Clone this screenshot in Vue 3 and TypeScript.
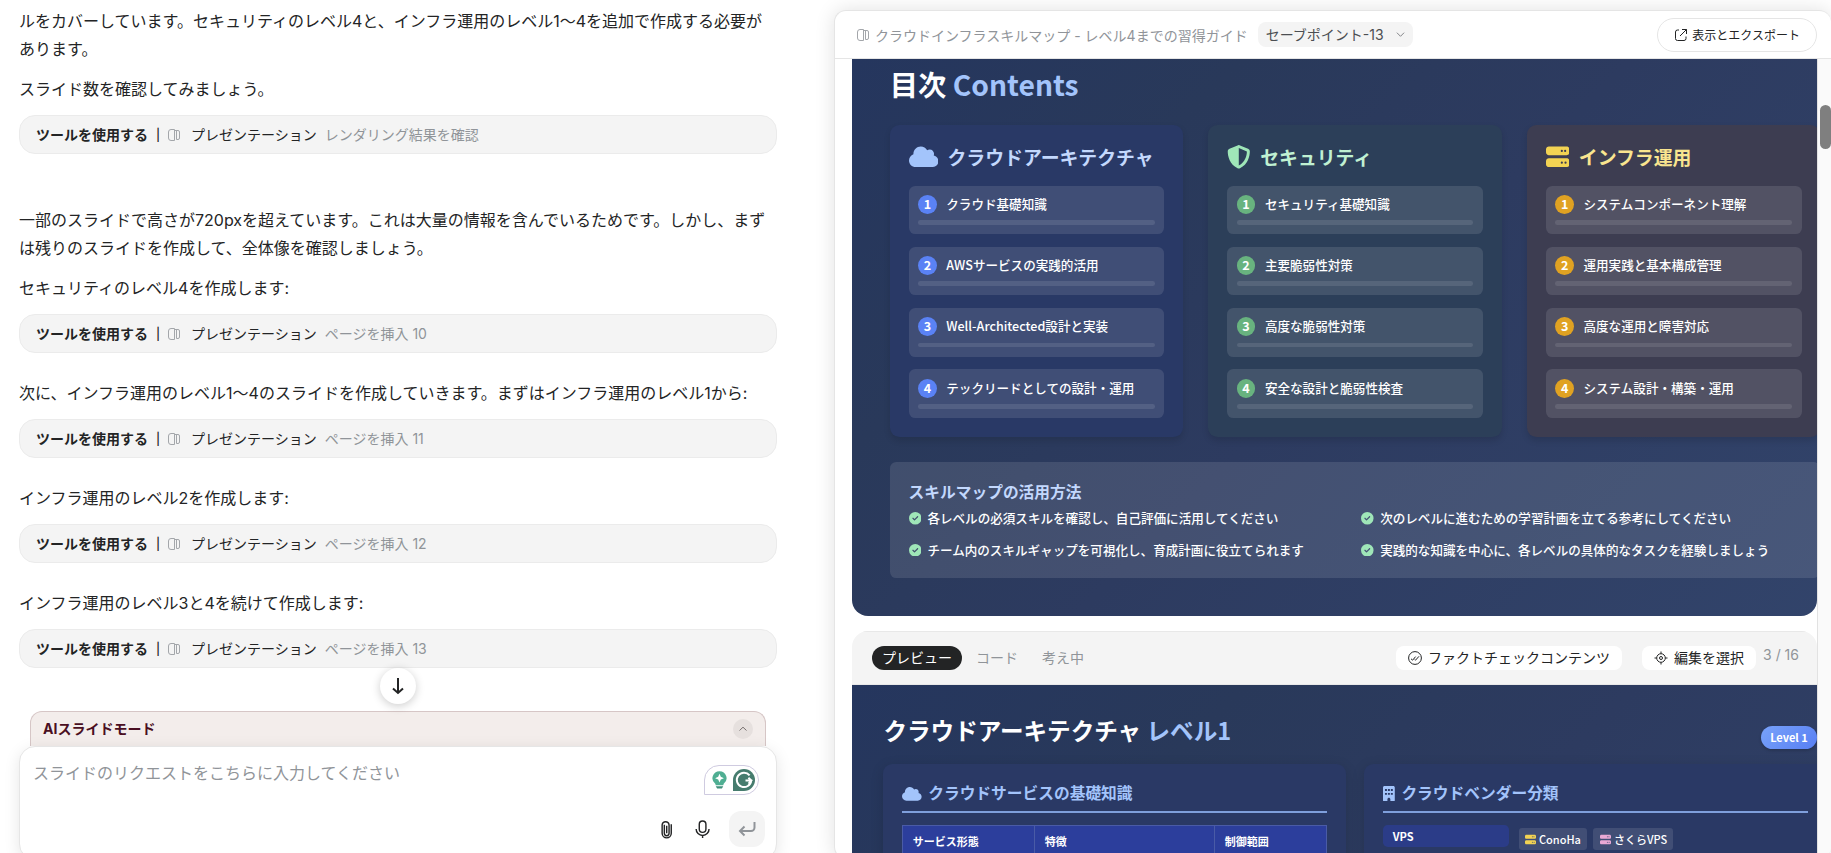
<script setup lang="ts">
import { ref } from 'vue'

interface Block {
  id: number
  lines: string[]
  action?: string
  spaced?: boolean
}

const blocks: Block[] = [
  {
    id: 1,
    lines: [
      'ルをカバーしています。セキュリティのレベル4と、インフラ運用のレベル1〜4を追加で作成する必要があります。',
      'スライド数を確認してみましょう。',
    ],
    action: 'レンダリング結果を確認',
    spaced: true,
  },
  {
    id: 2,
    lines: [
      '一部のスライドで高さが720pxを超えています。これは大量の情報を含んでいるためです。しかし、まずは残りのスライドを作成して、全体像を確認しましょう。',
      'セキュリティのレベル4を作成します:',
    ],
    action: 'ページを挿入 10',
  },
  {
    id: 3,
    lines: ['次に、インフラ運用のレベル1〜4のスライドを作成していきます。まずはインフラ運用のレベル1から:'],
    action: 'ページを挿入 11',
  },
  { id: 4, lines: ['インフラ運用のレベル2を作成します:'], action: 'ページを挿入 12' },
  { id: 5, lines: ['インフラ運用のレベル3と4を続けて作成します:'], action: 'ページを挿入 13' },
]

const deckPath =
  'M6.500 .5H3A2.500 2.500 0 0 0 .5 3v6A2.500 2.500 0 0 0 3 11.500h3.500zM6.500 1.500H10A1.500 1.500 0 0 1 11.500 3v6A1.500 1.500 0 0 1 10 10.500H8.500V1.500'
const serverPath =
  'M64 32C28.700 32 0 60.700 0 96v64c0 35.300 28.700 64 64 64H448c35.300 0 64-28.700 64-64V96c0-35.300-28.700-64-64-64H64zm280 72a24 24 0 1 1 0 48 24 24 0 1 1 0-48zm48 24a24 24 0 1 1 48 0 24 24 0 1 1 -48 0zM64 288c-35.300 0-64 28.700-64 64v64c0 35.300 28.700 64 64 64H448c35.300 0 64-28.700 64-64V352c0-35.300-28.700-64-64-64H64zm280 72a24 24 0 1 1 0 48 24 24 0 1 1 0-48zm56 24a24 24 0 1 1 48 0 24 24 0 1 1 -48 0z'
const cloudPath =
  'M0 336c0 79.500 64.500 144 144 144H512c70.700 0 128-57.300 128-128c0-61.900-44-113.600-102.400-125.400c4.100-10.700 6.400-22.400 6.400-34.600c0-53-43-96-96-96c-19.700 0-38.100 6-53.300 16.200C367 64.200 315.300 32 256 32C167.600 32 96 103.600 96 192c0 2.700 .1 5.400 .2 8.100C40.200 219.800 0 273.200 0 336z'
const shieldPath =
  'M256 0c4.600 0 9.200 1 13.400 2.900L457.700 82.800c22 9.300 38.400 31 38.300 57.200c-.5 99.200-41.300 280.700-213.600 363.200c-16.700 8-36.100 8-52.800 0C57.300 420.700 16.500 239.200 16 140c-.1-26.200 16.300-47.900 38.300-57.200L242.700 2.900C246.800 1 251.400 0 256 0zm0 66.800V444.800C394 378 431.100 230.100 432 141.400L256 66.800l0 0z'
const checkPath =
  'M256 512A256 256 0 1 0 256 0a256 256 0 1 0 0 512zM369 209L241 337c-9.400 9.400-24.600 9.400-33.900 0l-64-64c-9.400-9.400-9.400-24.600 0-33.900s24.600-9.400 33.900 0l47 47L335 175c9.400-9.400 24.600-9.400 33.900 0s9.400 24.600 0 33.900z'
const buildingPath =
  'M48 0C21.500 0 0 21.500 0 48V464c0 26.500 21.500 48 48 48h96V432c0-26.500 21.500-48 48-48s48 21.500 48 48v80h96c26.500 0 48-21.500 48-48V48c0-26.500-21.500-48-48-48H48zM64 96h64v64H64zM160 96h64v64h-64zM256 96h64v64h-64zM64 224h64v64H64zM160 224h64v64h-64zM256 224h64v64h-64z'

const tracks = [
  {
    key: 'cloud',
    title: 'クラウドアーキテクチャ',
    box: '0 0 640 512',
    icon: cloudPath,
    items: ['クラウド基礎知識', 'AWSサービスの実践的活用', 'Well-Architected設計と実装', 'テックリードとしての設計・運用'],
  },
  {
    key: 'security',
    title: 'セキュリティ',
    box: '0 0 512 512',
    icon: shieldPath,
    items: ['セキュリティ基礎知識', '主要脆弱性対策', '高度な脆弱性対策', '安全な設計と脆弱性検査'],
  },
  {
    key: 'infra',
    title: 'インフラ運用',
    box: '0 0 512 512',
    icon: serverPath,
    items: ['システムコンポーネント理解', '運用実践と基本構成管理', '高度な運用と障害対応', 'システム設計・構築・運用'],
  },
]

const tips = [
  '各レベルの必須スキルを確認し、自己評価に活用してください',
  '次のレベルに進むための学習計画を立てる参考にしてください',
  'チーム内のスキルギャップを可視化し、育成計画に役立てられます',
  '実践的な知識を中心に、各レベルの具体的なタスクを経験しましょう',
]

const tabs = ['プレビュー', 'コード', '考え中']
const activeTab = ref('プレビュー')
const savepoint = ref('セーブポイント-13')
const draft = ref('')
</script>

<template>
  <div class="page">
    <main class="chat">
      <div class="messages">
        <section v-for="b in blocks" :key="b.id" class="block" :class="{ spaced: b.spaced }">
          <p v-for="line in b.lines" :key="line">{{ line }}</p>
          <div class="tool">
            <strong>ツールを使用する</strong>
            <span class="bar">|</span>
            <svg class="deck" viewBox="0 0 12 12" aria-hidden="true"><path :d="deckPath" /></svg>
            <span>プレゼンテーション</span>
            <span class="action">{{ b.action }}</span>
          </div>
        </section>
      </div>

      <div class="dock">
        <button class="jump" type="button" aria-label="一番下へ">
          <svg viewBox="0 0 18 18" aria-hidden="true"><path d="M9 1v15M4 11.500l5 4.500 5-4.500" /></svg>
        </button>
        <div class="mode">
          <span>AIスライドモード</span>
          <button type="button" class="fold" aria-label="折りたたむ">
            <svg viewBox="0 0 10 10" aria-hidden="true"><path d="M1.500 6.500L5 3.200l3.500 3.300" /></svg>
          </button>
        </div>
        <form class="composer" @submit.prevent>
          <div class="entry">
            <textarea v-model="draft" rows="1" aria-label="リクエスト" placeholder="スライドのリクエストをこちらに入力してください"></textarea>
            <div class="assist">
              <svg class="bulb" viewBox="0 0 16 20" aria-hidden="true">
                <path d="M8 0a7.500 7.500 0 0 0-4.500 13.500L4 15h8l.5-1.500A7.500 7.500 0 0 0 8 0z" fill="#4fae92" />
                <path d="M4 16h8l-1.500 2.500h-5z" fill="#3f8f7b" />
                <path d="M8 2.800l1.400 3.300 3.300 1.400-3.300 1.400L8 12.200 6.600 8.900 3.300 7.500l3.300-1.400z" fill="#fff" />
              </svg>
              <svg class="gram" viewBox="0 0 22 22" aria-hidden="true">
                <path d="M11 0a11 11 0 0 1 0 22H0V11A11 11 0 0 1 11 0z" fill="#467c6e" />
                <path d="M16.600 6.300A7.200 7.200 0 1 0 18.200 11.600H12.500M15.400 8.700l3 2.900-2.900 3" fill="none" stroke="#fff" stroke-width="2" />
              </svg>
            </div>
          </div>
          <div class="actions">
            <button type="button" aria-label="添付">
              <svg viewBox="0 0 12 20" aria-hidden="true"><path d="M3.500 5v9a2.500 2.500 0 0 0 5 0V5A3.700 3.700 0 0 0 1.200 5v9a4.800 4.800 0 0 0 9.600 0V4.500M6 6v8" /></svg>
            </button>
            <button type="button" aria-label="音声入力">
              <svg viewBox="0 0 16 20" aria-hidden="true"><rect x="4.500" y="1" width="7" height="12" rx="3.500" /><path d="M1.200 9.500a6.800 6.800 0 0 0 13.600 0M8 16.300V19" /></svg>
            </button>
            <button type="submit" class="send" aria-label="送信">
              <svg viewBox="0 0 18 18" aria-hidden="true"><path d="M16.500 2v5.500A3.500 3.500 0 0 1 13 11H2M6.500 6.500L2 11l4.500 4.500" /></svg>
            </button>
          </div>
        </form>
      </div>
    </main>

    <aside class="panel">
      <header class="panel-head">
        <svg class="deck" viewBox="0 0 12 12" aria-hidden="true"><path :d="deckPath" /></svg>
        <h1>クラウドインフラスキルマップ - レベル4までの習得ガイド</h1>
        <div class="save">
          <select v-model="savepoint" aria-label="セーブポイント">
            <option>セーブポイント-13</option>
          </select>
          <svg viewBox="0 0 10 10" aria-hidden="true"><path d="M1 3l4 4 4-4" /></svg>
        </div>
        <button class="export" type="button">
          <svg viewBox="0 0 14 14" aria-hidden="true"><path d="M5 2H3.500A2 2 0 0 0 1.500 4v6.500a2 2 0 0 0 2 2H10a2 2 0 0 0 2-2V8.500M8 1.500h4.500V6M12.500 1.500L6 8" /></svg>
          表示とエクスポート
        </button>
      </header>

      <div class="viewport">
        <div class="deck-list">
          <article class="frame first">
            <div class="slide contents">
              <h2>目次 <em>Contents</em></h2>
              <div class="tracks">
                <section v-for="t in tracks" :key="t.key" class="track" :class="t.key">
                  <h3>
                    <svg :viewBox="t.box" aria-hidden="true"><path :d="t.icon" /></svg>
                    {{ t.title }}
                  </h3>
                  <ol>
                    <li v-for="(item, i) in t.items" :key="item">
                      <div class="row"><span class="num">{{ i + 1 }}</span>{{ item }}</div>
                      <div class="meter"></div>
                    </li>
                  </ol>
                </section>
              </div>
              <section class="note">
                <h4>スキルマップの活用方法</h4>
                <ul>
                  <li v-for="tip in tips" :key="tip">
                    <svg viewBox="0 0 512 512" aria-hidden="true"><path :d="checkPath" /></svg>{{ tip }}
                  </li>
                </ul>
              </section>
            </div>
          </article>

          <article class="frame">
            <div class="bar-top">
              <nav>
                <button v-for="tab in tabs" :key="tab" type="button" :class="{ on: tab === activeTab }" @click="activeTab = tab">{{ tab }}</button>
              </nav>
              <div class="tools">
                <button type="button">
                  <svg viewBox="0 0 14 14" aria-hidden="true"><circle cx="7" cy="7" r="6.400" /><path d="M3 7.800l1.600 1.400 3-3.600M6.600 8.300l.9.900L11 5.300" /></svg>
                  ファクトチェックコンテンツ
                </button>
                <button type="button">
                  <svg viewBox="0 0 14 14" aria-hidden="true"><circle cx="7" cy="7" r="4.300" /><circle cx="7" cy="7" r="1.500" /><path d="M7 .5v2.200M7 11.300v2.200M.5 7h2.200M11.300 7h2.200" /></svg>
                  編集を選択
                </button>
              </div>
              <span class="count">3 / 16</span>
            </div>
            <div class="slide level">
              <div class="title-row">
                <h2>クラウドアーキテクチャ <em>レベル1</em></h2>
                <span class="badge">Level 1</span>
              </div>
              <div class="halves">
                <section class="half">
                  <h3><svg viewBox="0 0 640 512" class="wide" aria-hidden="true"><path :d="cloudPath" /></svg>クラウドサービスの基礎知識</h3>
                  <table>
                    <thead>
                      <tr><th class="c1">サービス形態</th><th class="c2">特徴</th><th>制御範囲</th></tr>
                    </thead>
                  </table>
                </section>
                <section class="half">
                  <h3><svg viewBox="0 0 384 512" class="slim" aria-hidden="true"><path fill-rule="evenodd" :d="buildingPath" /></svg>クラウドベンダー分類</h3>
                  <div class="vendor">
                    <strong>VPS</strong>
                    <span class="tag yellow"><svg viewBox="0 0 512 512" aria-hidden="true"><path :d="serverPath" /></svg>ConoHa</span>
                    <span class="tag pink"><svg viewBox="0 0 512 512" aria-hidden="true"><path :d="serverPath" /></svg>さくらVPS</span>
                  </div>
                </section>
              </div>
            </div>
          </article>
        </div>
        <div class="track-bar"><div class="thumb"></div></div>
      </div>
    </aside>
  </div>
</template>

<style>
body {
  margin: 0;
  background: #fff;
}
</style>

<style scoped>
* {
  box-sizing: border-box;
}
h1, h2, h3, h4, p, ul, ol {
  margin: 0;
  padding: 0;
  list-style: none;
}
button {
  margin: 0;
  padding: 0;
  border: 0;
  background: none;
  font: inherit;
  color: inherit;
  cursor: pointer;
}
svg {
  flex: none;
}
em {
  font-style: normal;
}
.page {
  display: grid;
  grid-template-columns: minmax(0, 796fr) minmax(0, 997fr);
  column-gap: 38px;
  height: 100vh;
  overflow: hidden;
  font-family: Inter, "Noto Sans CJK JP", sans-serif;
  color: #232425;
}

/* chat column */
.chat {
  display: flex;
  flex-direction: column;
  min-height: 0;
  padding: 0 19px;
}
.messages {
  flex: 1;
  min-height: 0;
  overflow: hidden;
  display: flex;
  flex-direction: column;
  gap: 26px;
  padding-top: 7px;
}
.block {
  display: flex;
  flex-direction: column;
  gap: 12px;
  font-size: 16px;
  line-height: 28px;
}
.spaced {
  margin-bottom: 26px;
}
.tool {
  display: flex;
  align-items: center;
  height: 39px;
  padding: 0 16px;
  border: 1px solid #ebebeb;
  border-radius: 16px;
  background: #f4f4f4;
  font-size: 14px;
  line-height: 20px;
  white-space: nowrap;
}
.bar {
  width: 4px;
  margin: 0 8px;
  font-size: 12px;
  font-weight: 500;
  text-align: center;
}
.deck {
  width: 12px;
  height: 12px;
  fill: none;
  stroke: #a3a6aa;
}
.tool .deck {
  margin-right: 11px;
}
.action {
  margin-left: 8px;
  color: #909499;
}
.dock {
  position: relative;
  margin-bottom: -7px;
}
.jump {
  position: absolute;
  top: -43px;
  left: 50%;
  margin-left: -18px;
  width: 36px;
  height: 36px;
  display: grid;
  place-items: center;
  border-radius: 50%;
  background: #fff;
  box-shadow: 0 2px 10px rgba(0, 0, 0, 0.2);
}
.jump svg {
  width: 18px;
  height: 18px;
  fill: none;
  stroke: #232425;
  stroke-width: 2;
}
.mode {
  display: flex;
  align-items: center;
  justify-content: space-between;
  height: 35px;
  margin: 0 11px;
  padding: 0 12px;
  border: 1px solid #d6c6c6;
  border-bottom: 0;
  border-radius: 12px 12px 0 0;
  background: #f3edeb;
  color: #4a0f22;
  font-size: 14px;
  line-height: 20px;
  font-weight: 700;
}
.fold {
  display: grid;
  place-items: center;
  width: 20px;
  height: 20px;
  border-radius: 50%;
  background: #e6e0de;
}
.fold svg {
  width: 10px;
  height: 10px;
  fill: none;
  stroke: #77706f;
}
.composer {
  display: flex;
  flex-direction: column;
  justify-content: space-between;
  height: 114px;
  padding: 12px 11px;
  border: 1px solid #e6e6e6;
  border-radius: 16px;
  background: #fff;
  box-shadow: 0 4px 16px rgba(0, 0, 0, 0.1);
}
.entry {
  display: flex;
  justify-content: space-between;
  padding-right: 6px;
}
textarea {
  flex: 1;
  height: 28px;
  padding: 0 2px;
  border: 0;
  outline: 0;
  resize: none;
  overflow: hidden;
  background: none;
  font: inherit;
  font-size: 16px;
  line-height: 28px;
  color: #232425;
}
textarea::placeholder {
  color: #909499;
  opacity: 1;
}
.assist {
  display: flex;
  align-items: center;
  gap: 6px;
  height: 30px;
  margin-top: 6px;
  padding: 0 3px 0 7px;
  border: 1px solid #cfcbe0;
  border-radius: 15px 15px 15px 0;
}
.bulb {
  width: 15px;
  height: 19px;
}
.gram {
  width: 22px;
  height: 22px;
}
.actions {
  display: flex;
  justify-content: flex-end;
  align-items: center;
}
.actions button {
  display: grid;
  place-items: center;
  width: 36px;
  height: 36px;
}
.actions svg {
  height: 19px;
  fill: none;
  stroke: #232425;
  stroke-width: 1.500;
}
.actions .send {
  margin-left: 8px;
  border-radius: 12px;
  background: #f4f4f4;
}
.actions .send svg {
  height: 18px;
  stroke: #909499;
  stroke-width: 2;
}

/* presentation panel */
.panel {
  display: flex;
  flex-direction: column;
  min-width: 0;
  min-height: 0;
  margin: 10px 0 -6px;
  border: 1px solid #e5e5e5;
  border-right: 0;
  border-radius: 12px;
  background: #fff;
  box-shadow: 0 0 20px rgba(0, 0, 0, 0.12);
  overflow: hidden;
}
.panel-head {
  display: flex;
  align-items: center;
  flex: none;
  height: 48px;
  padding: 0 14px 0 22px;
  border-bottom: 1px solid #e5e5e5;
  font-size: 14px;
  white-space: nowrap;
}
.panel-head h1 {
  margin: 0 10px 0 6px;
  font-size: 14px;
  font-weight: 400;
  color: #909499;
}
.save {
  position: relative;
  display: flex;
  align-items: center;
}
.save select {
  appearance: none;
  height: 25px;
  padding: 0 28px 0 8px;
  border: 0;
  border-radius: 8px;
  background: #f4f4f4;
  font: inherit;
  font-size: 14px;
  color: #4b4e52;
}
.save svg {
  position: absolute;
  right: 8px;
  width: 9px;
  height: 9px;
  fill: none;
  stroke: #77797d;
  pointer-events: none;
}
.export {
  display: flex;
  align-items: center;
  gap: 4px;
  height: 34px;
  margin-left: auto;
  padding: 0 16px;
  border: 1px solid #e5e5e5;
  border-radius: 17px;
  font-size: 12px;
}
.export svg {
  width: 14px;
  height: 14px;
  fill: none;
  stroke: #232425;
}
.viewport {
  display: flex;
  flex: 1;
  min-height: 0;
}
.deck-list {
  flex: 1;
  min-width: 0;
  overflow: hidden;
  padding-left: 17px;
}
.track-bar {
  flex: none;
  width: 14px;
  padding: 46px 0 0 2px;
  border-left: 1px solid #e2e2e2;
  background: #fafafa;
}
.thumb {
  height: 44px;
  border-radius: 6px;
  background: #7f7f7f;
}
.frame {
  overflow: hidden;
  border-radius: 16px;
}
.first {
  margin-bottom: 15px;
  border-radius: 0 0 16px 16px;
}
.bar-top {
  display: flex;
  align-items: center;
  height: 54px;
  padding: 0 18px 0 20px;
  border: 1px solid #e8e8e8;
  border-width: 1px 0;
  background: #f4f4f4;
  font-size: 14px;
  line-height: 20px;
  white-space: nowrap;
}
.bar-top nav {
  display: flex;
  gap: 4px;
  color: #909499;
}
.bar-top nav button {
  height: 24px;
  padding: 0 10px;
  border-radius: 12px;
}
.bar-top nav .on {
  background: #232425;
  color: #fff;
}
.tools {
  display: flex;
  gap: 20px;
  margin-left: auto;
}
.tools button {
  display: flex;
  align-items: center;
  gap: 6px;
  height: 24px;
  padding: 0 12px;
  border-radius: 8px;
  background: #fff;
}
.tools svg {
  width: 14px;
  height: 14px;
  fill: none;
  stroke: #232425;
}
.count {
  align-self: flex-start;
  margin: 13px 0 0 7px;
  color: #909499;
}

/* slides are authored on a 1280-wide canvas and shown reduced */
.slide {
  zoom: 0.786;
  width: 1280px;
  font-family: "Noto Sans CJK JP", sans-serif;
  color: #fff;
  background: linear-gradient(135deg, #25365e 0%, #29395a 25%, #2d3b60 50%, #32446b 100%);
}
.slide em {
  color: #a3c4fb;
}
.contents {
  padding: 12px 48px 48px;
}
.contents h2 {
  margin-bottom: 32px;
  font-size: 36px;
  line-height: 40px;
  font-weight: 700;
}
.tracks {
  display: grid;
  grid-template-columns: repeat(3, 1fr);
  gap: 32px;
  margin-bottom: 32px;
}
.track {
  padding: 24px;
  border-radius: 12px;
  box-shadow: 0 4px 8px rgba(0, 0, 0, 0.12);
}
.track h3 {
  display: flex;
  align-items: center;
  gap: 12px;
  margin-bottom: 19px;
  font-size: 24px;
  line-height: 34px;
  font-weight: 700;
}
.track h3 svg {
  height: 30px;
}
.track ol {
  display: grid;
  gap: 16px;
}
.track li {
  padding: 12px;
  border-radius: 8px;
  background: rgba(255, 255, 255, 0.11);
}
.row {
  display: flex;
  align-items: center;
  gap: 12px;
  margin-bottom: 8px;
  font-size: 16px;
  line-height: 24px;
  font-weight: 500;
}
.num {
  width: 24px;
  height: 24px;
  border-radius: 50%;
  text-align: center;
  font-size: 16px;
  font-weight: 700;
}
.meter {
  height: 6px;
  border-radius: 3px;
  background: rgba(255, 255, 255, 0.1);
}
.cloud {
  background: #293966;
}
.cloud h3 {
  color: #c3d8fd;
}
.cloud h3 svg {
  fill: #a3c4fb;
}
.cloud .num {
  background: #5a82f5;
}
.security {
  background: #2c3f59;
}
.security h3 {
  color: #c0f1d2;
}
.security h3 svg {
  fill: #9fe6b8;
}
.security .num {
  background: #68b37f;
}
.infra {
  background: #3d3d51;
}
.infra h3 {
  color: #f9e58f;
}
.infra h3 svg {
  fill: #f3d353;
}
.infra .num {
  background: #e0a222;
}
.note {
  padding: 24px;
  border-radius: 8px;
  background: rgba(255, 255, 255, 0.11);
}
.note h4 {
  margin-bottom: 8px;
  font-size: 20px;
  line-height: 28px;
  font-weight: 700;
  color: #c3d8fd;
}
.note ul {
  display: grid;
  grid-template-columns: 1fr 1fr;
  gap: 16px;
}
.note li {
  display: flex;
  align-items: center;
  gap: 8px;
  font-size: 16px;
  line-height: 24px;
  font-weight: 500;
}
.note svg {
  width: 16px;
  height: 16px;
  fill: #9fe6b8;
}
.level {
  min-height: 720px;
  padding: 40px;
}
.title-row {
  display: flex;
  align-items: flex-end;
  justify-content: space-between;
  height: 42px;
  margin-bottom: 18px;
  padding-right: 12px;
}
.title-row h2 {
  align-self: flex-start;
  font-size: 30px;
  line-height: 38px;
  font-weight: 700;
}
.badge {
  padding: 0 12px;
  border-radius: 15px;
  background: linear-gradient(135deg, #78a2fa, #587ff3);
  box-shadow: 0 2px 4px rgba(0, 0, 0, 0.2);
  font-size: 14px;
  line-height: 30px;
  font-weight: 700;
}
.halves {
  display: grid;
  grid-template-columns: 1fr 1fr;
  gap: 24px;
}
.half {
  height: 580px;
  padding: 24px;
  border-radius: 12px;
  background: #2a3965;
  box-shadow: 0 4px 16px rgba(0, 0, 0, 0.14);
}
.half h3 {
  display: flex;
  align-items: center;
  gap: 8px;
  margin-bottom: 16px;
  padding-bottom: 8px;
  border-bottom: 3px solid #7f9fdc;
  font-size: 20px;
  line-height: 28px;
  font-weight: 700;
  color: #a3c4fb;
}
.half h3 svg {
  height: 20px;
  fill: #a3c4fb;
}
.half .wide {
  width: 25px;
}
.half .slim {
  width: 15px;
}
table {
  width: 100%;
  border-collapse: collapse;
  table-layout: fixed;
}
th {
  height: 40px;
  padding: 0 12px;
  border: 1px solid #4a5ba6;
  background: #2c3e9c;
  text-align: left;
  font-size: 14px;
  line-height: 20px;
  font-weight: 700;
}
.c1 {
  width: 168px;
}
.c2 {
  width: 229px;
}
.vendor {
  display: flex;
  align-items: flex-start;
  gap: 8px;
}
.vendor strong {
  width: 160px;
  margin-right: 4px;
  padding: 0 12px;
  border-radius: 6px;
  background: #2b3c88;
  font-size: 14px;
  line-height: 28px;
}
.tag {
  display: flex;
  align-items: center;
  gap: 4px;
  margin-top: 4px;
  padding: 0 8px;
  border-radius: 4px;
  background: rgba(255, 255, 255, 0.11);
  font-size: 14px;
  line-height: 28px;
  font-weight: 500;
}
.tag svg {
  width: 14px;
  height: 14px;
}
.yellow svg {
  fill: #f3d353;
}
.pink svg {
  fill: #e9a8d4;
}
</style>
